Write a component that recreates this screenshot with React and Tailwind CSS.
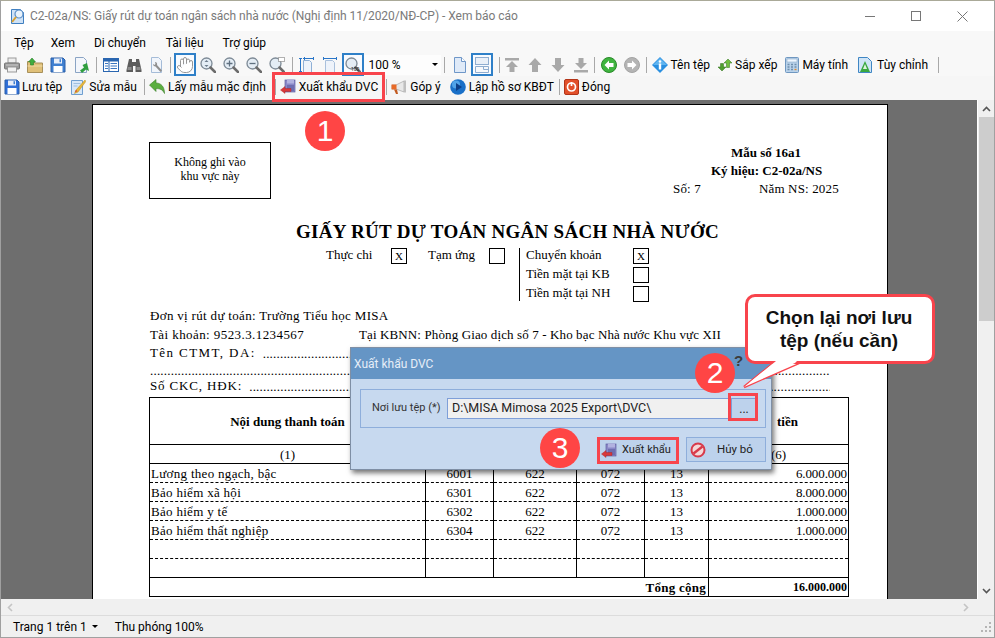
import React from "react";
import { Hand as HandIcon } from "lucide-react";

const S = ({ children, w = 16, h = 16, vb }) => (
  <svg width={w} height={h} viewBox={vb || `0 0 ${w} ${h}`} className="block shrink-0">{children}</svg>
);

const Printer = () => (
  <S><rect x="4" y="1" width="8" height="5" fill="#eee" stroke="#999" /><rect x="0.5" y="6" width="15" height="6" rx="1" fill="#9a9a9a" stroke="#777" /><rect x="3.5" y="10" width="9" height="5" fill="#f2f2f2" stroke="#999" /><rect x="2" y="7.5" width="12" height="1" fill="#ccc" /></S>
);
const FolderUp = () => (
  <S><path d="M0.5 4.5h6l1.5 1.5h7.5v9.5h-15z" fill="#e0c078" stroke="#a8905a" /><path d="M0.5 9h15" stroke="#f0dca8" /><path d="M5 1L1.5 5H3.5V8H6.5V5H8.500z" fill="#3fae3f" stroke="#2a802a" strokeWidth="0.6" /></S>
);
const Floppy = ({ c = "#3f7fd0" }) => (
  <S><path d="M1 1h12l2 2v12H1z" fill={c} stroke="#2a5ea8" /><rect x="4" y="1.500" width="8" height="5" fill="#e8eef8" /><rect x="3.500" y="9" width="9" height="6" fill="#fff" /><rect x="9.500" y="2.200" width="1.500" height="3" fill="#3f7fd0" /></S>
);
const ExportPage = () => (
  <S><path d="M2.500 0.500h8l3 3v12h-11z" fill="#f3f6fb" stroke="#8ba4c4" /><path d="M14 6l2 8-3-1.500-4 3.500-2-2.500 4-3-1.500-2.500z" fill="#2f9e3f" /></S>
);
const TableView = () => (
  <S><rect x="0.500" y="1.500" width="15" height="13" fill="#fff" stroke="#2a66b0" /><rect x="1" y="2" width="14" height="2.500" fill="#2a66b0" /><path d="M6 4v10" stroke="#2a66b0" /><path d="M2 6.500h3M7.500 6.500h6.500M2 9h3M7.500 9h6.500M2 11.500h3M7.500 11.500h6.500" stroke="#3a76c0" /></S>
);
const Binoculars = () => (
  <S><path d="M3 2h3v3h4V2h3l2.500 11v2h-6V9H7v6H0.500v-2z" fill="#5c5c5c" /><rect x="1.500" y="10" width="4" height="3" fill="#8c8c8c" /><rect x="10.500" y="10" width="4" height="3" fill="#8c8c8c" /></S>
);
const PageWrench = () => (
  <S><path d="M2.500 0.500h7l3 3v12h-10z" fill="#f1f5fb" stroke="#a5bcd8" /><path d="M6 5c2 0 2.500 2 2 3l5 5.500-1.500 1.500-5-5.500c-1.500 0-2.500-1-2.500-2.500l1.500 1 1-1z" fill="#8f8f8f" /></S>
);
const Mag = ({ children }) => (
  <S>
    <circle cx="6.500" cy="6.500" r="5.500" fill="#e4edf5" stroke="#7d8a96" strokeWidth="1.300" />
    <path d="M10.500 10.500l4.500 4.500" stroke="#6c6c6c" strokeWidth="2.500" strokeLinecap="round" />
    {children}
  </S>
);
const FitH = () => (
  <S><path d="M4.500 3.500h6l2 2v10h-8z" fill="#eef3fa" stroke="#8fb0d6" /><path d="M1.500 1v14M0 1.500h3M0 14.500h3M4 1.500h11M5.500 0v3M14.500 0v3" stroke="#2a76c8" /></S>
);
const FitW = () => (
  <S><path d="M3.500 3.500h7l2 2v10h-9z" fill="#eef3fa" stroke="#a9c0dc" /><path d="M1 1.500h14M1.500 0v3M14.500 0v3" stroke="#2a76c8" /></S>
);
const PageOne = () => (
  <S><path d="M2.500 0.500h7l4 4v11h-11z" fill="#dfeaf8" stroke="#6f97c8" /><path d="M9.500 0.500v4h4" fill="#fff" stroke="#6f97c8" /></S>
);
const PageTwo = () => (
  <S><rect x="1.500" y="0.500" width="13" height="7" fill="#eaf0f8" stroke="#8fadd0" /><path d="M1.500 9.500h13v6h-13z" fill="#f6f8fb" stroke="#8fadd0" /><path d="M9.500 9.500v3h5" fill="none" stroke="#8fadd0" /></S>
);
const ArrowGray = ({ dir }) => (
  <S>
    {dir === "top" && <><rect x="1" y="1" width="14" height="2.500" fill="#a9a9a9" /><path d="M8 4l6 6h-3.500v5h-5v-5H2z" fill="#a9a9a9" /></>}
    {dir === "up" && <path d="M8 1l6.500 7H11v7H5V8H1.500z" fill="#a9a9a9" />}
    {dir === "down" && <path d="M8 15l6.500-7H11V1H5v7H1.500z" fill="#a9a9a9" />}
    {dir === "bottom" && <><rect x="1" y="13" width="14" height="2.500" fill="#a9a9a9" /><path d="M8 12l6-6h-3.500V1h-5v5H2z" fill="#a9a9a9" /></>}
  </S>
);
const RoundArrow = ({ fill, edge, flip }) => (
  <S>
    <circle cx="8" cy="8" r="7.500" fill={fill} stroke={edge} />
    <path d={flip ? "M8 3.500L12.500 8 8 12.500V10H3.500V6H8z" : "M8 3.500L3.500 8 8 12.500V10h4.500V6H8z"} fill="#fff" />
  </S>
);
const Info = () => (
  <S><path d="M8 0L16 8 8 16 0 8z" fill="#2a8fe0" /><path d="M8 1L1 8h14z" fill="#5fb4f0" /><circle cx="8" cy="4.500" r="1.300" fill="#fff" /><rect x="6.800" y="6.500" width="2.400" height="6" fill="#fff" /></S>
);
const Sort = () => (
  <S><path d="M5 7l4 4H6.500v3.500h-3V11H1z" fill="#4f9e2f" stroke="#2f6e1a" strokeWidth="0.500" transform="rotate(180 5 10.500)" /><path d="M11 2l4 4h-2.500v4.500h-3V6H7z" fill="#6fbe3f" stroke="#2f6e1a" strokeWidth="0.500" /></S>
);
const Calc = () => (
  <S><rect x="1.500" y="0.500" width="13" height="15" rx="1" fill="#b9d2ea" stroke="#6f97c0" /><rect x="3" y="2" width="10" height="3" fill="#eef6ff" stroke="#7fa0c0" strokeWidth="0.500" /><path d="M3.500 7.500h2M7 7.500h2M10.500 7.500h2M3.500 10h2M7 10h2M10.500 10h2M3.500 12.500h2M7 12.500h2" stroke="#6f8fae" strokeWidth="1.400" /><path d="M10.500 12.500h2" stroke="#e08a30" strokeWidth="1.400" /></S>
);
const Custom = () => (
  <S><path d="M1.500 0.500h9l4 4v11h-13z" fill="#cfe4f6" stroke="#3f86c4" /><path d="M8 4l5 11H3z" fill="#3aa83f" /><path d="M8 7l2 5H6z" fill="#dff3df" /></S>
);
const EditForm = () => (
  <S><path d="M1.500 1.500h11v14h-11z" fill="#d8e8f8" stroke="#6f9fd0" /><path d="M3.500 4.500h7M3.500 7h4" stroke="#9fc0e0" /><path d="M15 1l-9 10-1.500 3.500L8 13 15.800 2.500z" fill="#e8b83a" stroke="#b88a20" strokeWidth="0.500" /><path d="M5 13l1-2 1.300 1.200z" fill="#d63030" /></S>
);
const ReturnArrow = () => (
  <S><path d="M0.500 6L7 0.500V4c5 0 8.500 3.500 8.500 10.500C14 11 11.500 9.500 7 9.500V12.500z" fill="#5aae3f" stroke="#3a7e28" strokeWidth="0.600" /></S>
);
const ExportDVC = ({ s = 16 }) => (
  <S w={s} h={s} vb="0 0 16 16"><rect x="5" y="1" width="10" height="12" fill="#8a88c8" stroke="#5f5ea0" strokeWidth="0.700" /><rect x="7" y="0.500" width="7" height="4" fill="#b2b2e0" /><rect x="7" y="6" width="7" height="6" fill="#6f6eb0" /><path d="M0.500 11L5 7.500V9.500h6v3H5v2z" fill="#d8383a" stroke="#a82020" strokeWidth="0.400" /></S>
);
const Megaphone = () => (
  <S><path d="M1 6h4l8-4v11L5 10H1z" fill="#e8e8e8" stroke="#9a9a9a" strokeWidth="0.600" /><rect x="0.500" y="5.500" width="5" height="5" fill="#e86a28" /><path d="M13 1.500h2V13.500h-2z" fill="#bfbfbf" /><path d="M3 10.500h3l1 4.500H5z" fill="#c25a20" /></S>
);
const Globe = () => (
  <S><circle cx="8" cy="8" r="7.800" fill="#1a70c8" /><circle cx="6" cy="5.500" r="4" fill="#5fb0f0" opacity="0.800" /><path d="M6 4l6 4-6 4z" fill="#0d3f88" /></S>
);
const Power = () => (
  <S><rect x="0.500" y="0.500" width="14" height="15" rx="1.500" fill="#e2502a" stroke="#b23418" /><circle cx="7.500" cy="8" r="4" fill="none" stroke="#fff" strokeWidth="1.700" /><path d="M7.500 3v4" stroke="#fff" strokeWidth="1.700" /></S>
);
const AppIcon = () => (
  <S w={18} h={18}><path d="M2.500 2.500h9l3 3v11h-12z" fill="#cfe2f6" stroke="#3f7fc0" /><circle cx="10" cy="7" r="4" fill="#e8f2fb" stroke="#5b8fc8" strokeWidth="1.200" /><path d="M7 10L3 15" stroke="#d8a030" strokeWidth="2" /></S>
);

const Cell = ({ children, className = "w-[23px]" }) => (
  <div className={`h-[23px] flex items-center justify-center shrink-0 ${className}`}>{children}</div>
);
const Selected = ({ children }) => (
  <div className="w-[22px] h-[23px] flex items-center justify-center shrink-0 border-2 border-[#2f80c8] bg-[#f8fbff]">{children}</div>
);
const Sep = ({ className = "mx-[3px]" }) => <div className={`w-[1px] h-[16px] bg-[#a8a8a8] shrink-0 ${className}`} />;
const Lbl = ({ icon, children, gap = "gap-[3px]", className = "" }) => (
  <div className={`flex items-center shrink-0 ${gap} ${className}`}>
    {icon}
    <span className="text-[12px] text-black whitespace-nowrap leading-none">{children}</span>
  </div>
);

const Box = ({ x }) => (
  <div className="w-[16px] h-[16px] border border-black flex items-center justify-center text-[11px] leading-none shrink-0">{x ? "X" : ""}</div>
);

const rows = [
  ["Lương theo ngạch, bậc", "6001", "622", "072", "13", "6.000.000"],
  ["Bảo hiểm xã hội", "6301", "622", "072", "13", "8.000.000"],
  ["Bảo hiểm y tế", "6302", "622", "072", "13", "1.000.000"],
  ["Bảo hiểm thất nghiệp", "6304", "622", "072", "13", "1.000.000"],
  ["", "", "", "", "", ""],
  ["", "", "", "", "", ""],
];

const Dots = ({ className = "" }) => (
  <span className={`flex-1 overflow-hidden whitespace-nowrap tracking-[0.2px] ${className}`}>{".".repeat(300)}</span>
);

const Num = ({ n, className }) => (
  <div className={`absolute w-[40px] h-[40px] rounded-full bg-[#ff4545] text-white flex items-center justify-center text-[30px] leading-none font-['Liberation_Sans',sans-serif] ${className}`}>{n}</div>
);

export default function App() {
  return (
    <div className="relative w-[995px] h-[638px] overflow-hidden bg-[#f0f0f0] border border-[#a0a0a0] border-t-[#aaa998] flex flex-col font-['Roboto',sans-serif] text-black">
      {/* title bar */}
      <div className="h-[30px] bg-white flex items-center pl-[8px] shrink-0">
        <AppIcon />
        <span className="ml-[3px] text-[12px] text-[#7a7a7a] tracking-[-0.03px] whitespace-nowrap">C2-02a/NS: Giấy rút dự toán ngân sách nhà nước (Nghị định 11/2020/NĐ-CP) - Xem báo cáo</span>
        <div className="ml-auto flex items-center">
          <div className="w-[46px] flex justify-center"><div className="w-[10px] h-px bg-[#777]" /></div>
          <div className="w-[46px] flex justify-center"><div className="w-[10px] h-[10px] border border-[#777]" /></div>
          <div className="w-[46px] flex justify-center">
            <svg width="11" height="11" viewBox="0 0 11 11"><path d="M0.500 0.500l10 10M10.500 0.500l-10 10" stroke="#777" /></svg>
          </div>
          <div className="w-[9px]" />
        </div>
      </div>
      {/* menu */}
      <div className="h-[23px] bg-[#f8f8f8] flex items-center pl-[13px] gap-[19px] text-[12px] shrink-0">
        <span className="mr-[-2px]">Tệp</span><span>Xem</span><span className="mr-[1px]">Di chuyển</span><span>Tài liệu</span><span>Trợ giúp</span>
      </div>
      {/* toolbar 1 */}
      <div className="h-[23px] mt-[-1px] bg-[#f8f8f8] flex items-center ml-[-0.5px] shrink-0">
        <Cell><Printer /></Cell><Cell><FolderUp /></Cell><Cell><Floppy /></Cell><Cell><ExportPage /></Cell>
        <Sep />
        <Cell><TableView /></Cell><Cell><Binoculars /></Cell><Cell><PageWrench /></Cell>
        <Sep className="ml-[1.5px] mr-[3px]" />
        <Selected><HandIcon size={18} strokeWidth={1.2} color="#8a8a8a" fill="#ffffff" /></Selected>
        <Cell className="w-[23px] ml-[0.5px]"><Mag><path d="M6.500 3l2 2h-4zM6.500 10l2-2h-4z" fill="#6c7c8c" /></Mag></Cell>
        <Cell><Mag><path d="M3.500 6.500h6M6.500 3.500v6" stroke="#5f7080" strokeWidth="1.300" /></Mag></Cell>
        <Cell><Mag><path d="M3.500 6.500h6" stroke="#5f7080" strokeWidth="1.300" /></Mag></Cell>
        <Cell><Mag><rect x="9.500" y="0.500" width="6" height="4" fill="#fff" stroke="#666" strokeDasharray="1 1" /></Mag></Cell>
        <Sep />
        <Cell><FitH /></Cell><Cell><FitW /></Cell>
        <Selected><Mag><text x="6" y="14" fontSize="5" fill="#222" fontFamily="Roboto, sans-serif">100</text></Mag></Selected>
        <div className="w-[77px] h-[20px] bg-[#fdfdfd] flex items-center pl-[5px] shrink-0">
          <span className="text-[12px]">100 %</span>
          <div className="ml-auto mr-[3px] w-0 h-0 border-x-[3px] border-x-transparent border-t-[3px] border-t-black" />
        </div>
        <Sep className="ml-[3px] mr-[4.5px]" />
        <Cell className="w-[21.5px]"><PageOne /></Cell>
        <Selected><PageTwo /></Selected>
        <Sep className="ml-[6px] mr-[0.5px]" />
        <Cell><ArrowGray dir="top" /></Cell><Cell><ArrowGray dir="up" /></Cell><Cell><ArrowGray dir="down" /></Cell><Cell><ArrowGray dir="bottom" /></Cell>
        <Sep className="ml-[2px] mr-[2px]" />
        <Cell><RoundArrow fill="#3fb43f" edge="#2a8a2a" /></Cell><Cell><RoundArrow fill="#b4b4b4" edge="#a4a4a4" flip /></Cell>
        <Sep />
        <Lbl icon={<Info />} className="mr-[7px] ml-[1.5px]">Tên tệp</Lbl>
        <Lbl icon={<Sort />} gap="gap-[2px]" className="mr-[6.5px]">Sắp xếp</Lbl>
        <Lbl icon={<Calc />} gap="gap-[2.5px]" className="mr-[9px]">Máy tính</Lbl>
        <Lbl icon={<Custom />} gap="gap-[4px]" className="mr-[7px]">Tùy chỉnh</Lbl>
        <Sep />
      </div>
      {/* toolbar 2 */}
      <div className="h-[24px] pb-[2px] bg-[#f6f6f6] flex items-center pl-[3px] shrink-0">
        <Lbl icon={<Floppy c="#2f6fd8" />} gap="gap-[2px]" className="mr-[8px]">Lưu tệp</Lbl>
        <Lbl icon={<EditForm />} gap="gap-[3px]" className="mr-[4px]">Sửa mẫu</Lbl>
        <Sep />
        <Lbl icon={<ReturnArrow />} className="ml-[1px] mr-[6px]">Lấy mẫu mặc định</Lbl>
        <Sep />
        <Lbl icon={<ExportDVC />} className="ml-[1px] mr-[5px]">Xuất khẩu DVC</Lbl>
        <Sep />
        <Lbl icon={<Megaphone />} gap="gap-[3px]" className="ml-[1px] mr-[9px]">Góp ý</Lbl>
        <Lbl icon={<Globe />} gap="gap-[3px]" className="mr-[2px]">Lập hồ sơ KBĐT</Lbl>
        <Sep />
        <Lbl icon={<Power />} gap="gap-[2px]" className="ml-[1px]">Đóng</Lbl>
      </div>

      {/* viewer */}
      <div className="flex-1 min-h-0 flex">
        <div className="flex-1 min-w-0 bg-[#6e6e6e] pt-[4px] pl-[91px] overflow-hidden">
          <div className="w-[796px] h-[600px] bg-white border border-black pl-[56px] pr-[37px] font-['Liberation_Serif',serif] text-[13px] leading-[19px] text-black">
            {/* head */}
            <div className="flex mt-[37px] h-[57px]">
              <div className="w-[122px] h-[57px] border border-black flex flex-col items-center justify-center text-[12px] leading-[14px] pb-[3px]">
                <span>Không ghi vào</span><span>khu vực này</span>
              </div>
              <div className="ml-[403px] w-[166px] pt-[2px] flex flex-col text-[13px] leading-[18px] whitespace-nowrap">
                <span className="font-bold ml-[57px]">Mẫu số 16a1</span>
                <span className="font-bold ml-[37px]">Ký hiệu: C2-02a/NS</span>
                <span className="ml-[-1px] flex tracking-[0.15px]"><span className="w-[86px]">Số: 7</span><span>Năm NS: 2025</span></span>
              </div>
            </div>
            <div className="mt-[21px] h-[24px] pl-[147px] text-[19px] leading-[24px] font-bold whitespace-nowrap tracking-[0.28px]">GIẤY RÚT DỰ TOÁN NGÂN SÁCH NHÀ NƯỚC</div>
            {/* check rows */}
            <div className="mt-[4px] flex h-[53px] items-start">
              <span className="ml-[177px] w-[65px] leading-[14px] whitespace-nowrap">Thực chi</span>
              <Box x />
              <span className="ml-[21px] w-[61px] leading-[14px] whitespace-nowrap">Tạm ứng</span>
              <Box />
              <div className="ml-[14px] h-[53px] border-l border-black pl-[6px] flex flex-col gap-[3px]">
                <div className="flex items-center h-[16px]"><span className="w-[107px] whitespace-nowrap leading-[12px] mt-[-3px]">Chuyển khoản</span><Box x /></div>
                <div className="flex items-center h-[16px]"><span className="w-[107px] whitespace-nowrap leading-[12px] mt-[-2px]">Tiền mặt tại KB</span><Box /></div>
                <div className="flex items-center h-[16px]"><span className="w-[107px] whitespace-nowrap leading-[12px] mt-[-2px]">Tiền mặt tại NH</span><Box /></div>
              </div>
            </div>
            <div className="mt-[5px] pl-[1px] tracking-[0.32px] whitespace-nowrap">Đơn vị rút dự toán: Trường Tiểu học MISA</div>
            <div className="flex pl-[1px] tracking-[0.42px] whitespace-nowrap">
              <span className="w-[209px]">Tài khoản: 9523.3.1234567</span>
              <span className="tracking-[0.12px]">Tại KBNN: Phòng Giao dịch số 7 - Kho bạc Nhà nước Khu vực XII</span>
            </div>
            <div className="flex pl-[1px] whitespace-nowrap w-[681px] mt-[-1px]">
              <span className="tracking-[1.4px] mr-[7px]">Tên CTMT, DA:</span><Dots className="relative top-[1px]" />
            </div>
            <div className="w-[681px] flex h-[14px] leading-[14px] pl-[1px] mt-[2px]"><Dots /></div>
            <div className="flex pl-[1px] whitespace-nowrap w-[681px] h-[21px] mt-[-2px]">
              <span className="tracking-[0.85px] mr-[7px]">Số CKC, HĐK:</span><Dots className="relative top-[1px]" />
            </div>
            {/* table */}
            <table className="w-[699px] table-fixed border-collapse border border-black text-[13px] leading-[17px]">
              <colgroup>
                <col className="w-[276px]" /><col className="w-[68px]" /><col className="w-[83px]" /><col className="w-[68px]" /><col className="w-[64px]" /><col className="w-[140px]" />
              </colgroup>
              <tbody>
                <tr className="h-[47px] font-bold text-center border-b border-black">
                  <td className="border-r border-black">Nội dung thanh toán</td>
                  <td className="border-r border-black">Mã NDKT</td>
                  <td className="border-r border-black">Mã chương</td>
                  <td className="border-r border-black">Mã ngành KT</td>
                  <td className="border-r border-black">Mã nguồn</td>
                  <td className="pr-[2px] [word-spacing:3px]">Số tiền</td>
                </tr>
                <tr className="h-[19px] text-center border-b border-black">
                  <td className="border-r border-black">(1)</td>
                  <td className="border-r border-black">(2)</td>
                  <td className="border-r border-black">(3)</td>
                  <td className="border-r border-black">(4)</td>
                  <td className="border-r border-black">(5)</td>
                  <td>(6)</td>
                </tr>
                {rows.map((r, i) => (
                  <tr key={i} className={`h-[19px] ${i < 5 ? "border-b border-dashed border-black" : "border-b border-black"}`}>
                    <td className="border-r border-black pl-[1px] p-0 tracking-[0.3px] whitespace-nowrap">{r[0]}</td>
                    <td className="border-r border-black text-center p-0">{r[1]}</td>
                    <td className="border-r border-black text-center p-0">{r[2]}</td>
                    <td className="border-r border-black text-center p-0">{r[3]}</td>
                    <td className="border-r border-black text-center p-0">{r[4]}</td>
                    <td className="text-right pr-[1px] p-0 tracking-[-0.1px]">{r[5]}</td>
                  </tr>
                ))}
                <tr className="h-[19px] font-bold">
                  <td colSpan={5} className="text-right border-r border-black pr-[2px] tracking-[0.25px]">Tổng cộng</td>
                  <td className="text-right pr-[1px] text-[12px]">16.000.000</td>
                </tr>
              </tbody>
            </table>
          </div>
        </div>
        {/* vertical scrollbar */}
        <div className="w-[17px] shrink-0 bg-[#f0f0f0] border-l border-white flex flex-col items-center">
          <div className="h-[17px] flex items-center justify-center">
            <svg width="9" height="6" viewBox="0 0 9 6"><path d="M1 5l3.500-3.500L8 5" fill="none" stroke="#555" strokeWidth="1.600" /></svg>
          </div>
          <div className="w-[15px] h-[204px] bg-[#cdcdcd]" />
          <div className="mt-auto h-[17px] flex items-center justify-center">
            <svg width="9" height="6" viewBox="0 0 9 6"><path d="M1 1l3.500 3.500L8 1" fill="none" stroke="#555" strokeWidth="1.600" /></svg>
          </div>
        </div>
      </div>
      {/* horizontal scrollbar */}
      <div className="h-[17px] shrink-0 bg-[#f0f0f0] border-b border-[#dcdcdc] flex items-center justify-between px-[6px] pr-[25px]">
        <svg width="6" height="9" viewBox="0 0 6 9"><path d="M5 1L1.500 4.500 5 8" fill="none" stroke="#c4c4c4" strokeWidth="1.600" /></svg>
        <svg width="6" height="9" viewBox="0 0 6 9"><path d="M1 1l3.500 3.500L1 8" fill="none" stroke="#c4c4c4" strokeWidth="1.600" /></svg>
      </div>
      {/* status bar */}
      <div className="h-[21px] shrink-0 bg-[#f0f0f0] flex items-center pl-[12px] text-[12px] relative">
        <span>Trang 1 trên 1</span>
        <div className="ml-[5px] w-0 h-0 border-x-[3px] border-x-transparent border-t-[3px] border-t-black" />
        <span className="ml-[17px]">Thu phóng 100%</span>
        <svg className="ml-auto mr-[2px]" width="12" height="12" viewBox="0 0 12 12">
          <path d="M9 1h2v2H9zM5 5h2v2H5zM9 5h2v2H9zM1 9h2v2H1zM5 9h2v2H5zM9 9h2v2H9z" fill="#b5b5b5" />
        </svg>
      </div>

      {/* annotation: highlight on toolbar */}
      <div className="absolute left-[271px] top-[71px] w-[113px] h-[30px] border-[3px] border-[#f8444c]" />
      <Num n="1" className="left-[304px] top-[110px]" />

      {/* dialog */}
      <div className="absolute left-[349px] top-[346px] w-[422px] h-[123px] bg-[#c7d9ef] border border-[#7f8fa5] shadow-[2px_3px_5px_rgba(0,0,0,0.55)] flex flex-col font-['Roboto',sans-serif]">
        <div className="h-[31px] bg-[#6595c5] flex items-center pl-[3px] shrink-0 relative">
          <span className="text-[12px] text-[#e6eef8]">Xuất khẩu DVC</span>
          <span className="absolute left-[383px] top-[2px] text-[15px] font-bold text-[#3c3c3c] font-['Liberation_Sans',sans-serif]">?</span>
        </div>
        <div className="mx-[9px] mt-[10px] h-[39px] w-[406px] border border-[#8eaedb] flex items-center pl-[11px]">
          <span className="text-[11px] text-[#333] w-[75px] whitespace-nowrap">Nơi lưu tệp (*)</span>
          <div className="w-[284px] h-[21px] bg-[#f0f0f0] border border-[#7f9fd8] flex items-center pl-[4px] text-[12.5px] text-[#222] whitespace-nowrap">D:\MISA Mimosa 2025 Export\DVC\</div>
          <div className="w-[26px] h-[21px] bg-[#bdd2ec] border border-[#7f9fd8] flex items-center justify-center text-[12px] text-[#222] leading-none">...</div>
        </div>
        <div className="flex pl-[246px] mt-[9px] gap-[7px]">
          <div className="w-[82px] h-[27px] border-[3px] border-[#f8444c] bg-[#bdd2ec] flex items-center pl-[1px] gap-[5px] text-[11px] text-[#222]">
            <ExportDVC /><span className="whitespace-nowrap">Xuất khẩu</span>
          </div>
          <div className="w-[80px] h-[25px] border border-[#8eaedb] bg-[#bdd2ec] flex items-center pl-[3px] text-[11.5px] text-[#222]">
            <svg width="16" height="16" viewBox="0 0 16 16"><circle cx="8" cy="8" r="6.500" fill="#f4d8d8" stroke="#d83a4a" strokeWidth="2" /><path d="M3.500 11.500l9-7" stroke="#d83a4a" strokeWidth="2.400" /></svg>
            <span className="ml-[11px]">Hủy bỏ</span>
          </div>
        </div>
      </div>
      <div className="absolute left-[727px] top-[392px] w-[30px] h-[28px] border-[3px] border-[#f8444c]" />
      <Num n="2" className="left-[694px] top-[352px]" />
      <Num n="3" className="left-[539px] top-[427px]" />

      {/* callout */}
      <svg className="absolute left-[734px] top-[349px]" width="80" height="42" viewBox="0 0 80 42">
        <path d="M9 37L40 12M9 37L66 12" fill="none" stroke="#f8444c" strokeWidth="2.500" />
        <path d="M9 37L40 12H66Z" fill="#fff" />
      </svg>
      <div className="absolute left-[744px] top-[293px] w-[190px] h-[70px] rounded-[10px] border-[3px] border-[#f8444c] bg-white flex items-center justify-center text-center text-[19px] leading-[23px] font-bold text-[#111] font-['Liberation_Sans',sans-serif] whitespace-nowrap pr-[2px]">
        <span>Chọn lại nơi lưu<br />tệp (nếu cần)</span>
      </div>
      <svg className="absolute left-[734px] top-[349px]" width="80" height="42" viewBox="0 0 80 42">
        <path d="M14 33L41 11H62L60 13Z" fill="#fff" />
      </svg>
    </div>
  );
}
